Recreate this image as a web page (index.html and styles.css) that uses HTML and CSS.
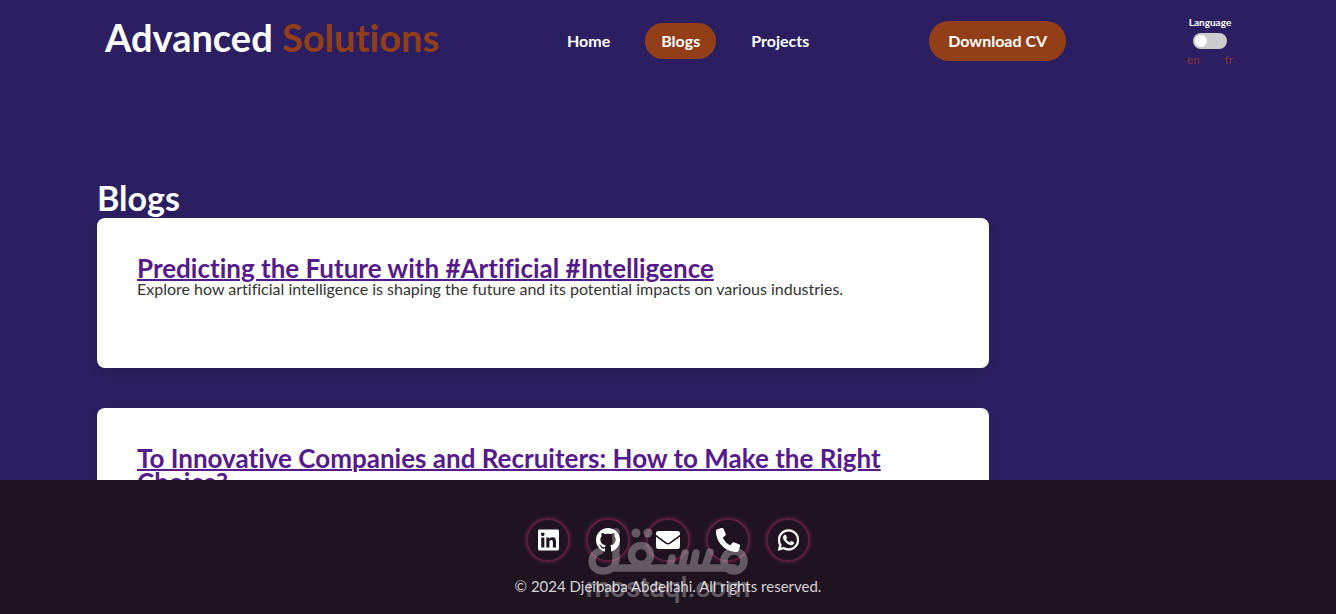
FILE: index.html
```html
<!DOCTYPE html>
<html lang="en">
<head>
<meta charset="utf-8">
<title>Advanced Solutions - Blogs</title>
<link rel="stylesheet" href="styles.css">
</head>
<body>
<header class="header">
  <a class="brand" href="#">Advanced <span class="brand-accent">Solutions</span></a>
  <nav class="nav">
    <a class="nav-link" href="#">Home</a>
    <a class="nav-link active" href="#">Blogs</a>
    <a class="nav-link" href="#">Projects</a>
  </nav>
  <button class="cv-button" type="button">Download CV</button>
  <div class="language">
    <label class="language-label" for="lang">Language</label>
    <input class="switch" id="lang" type="checkbox" role="switch">
    <div class="language-codes"><span>en</span><span>fr</span></div>
  </div>
</header>
<main class="main">
  <h1 class="page-title">Blogs</h1>
  <article class="card">
    <h2 class="card-title"><a href="#">Predicting the Future with #Artificial #Intelligence</a></h2>
    <p class="card-text">Explore how artificial intelligence is shaping the future and its potential impacts on various industries.</p>
  </article>
  <article class="card">
    <h2 class="card-title"><a href="#">To Innovative Companies and Recruiters: How to Make the Right Choice?</a></h2>
  </article>
</main>
<footer class="footer">
  <div class="socials">
    <a class="social" href="#" aria-label="LinkedIn"><svg class="icon" viewBox="0 0 448 512"><path d="M416 32H31.900C14.300 32 0 46.500 0 64.300v383.400C0 465.500 14.300 480 31.900 480H416c17.600 0 32-14.500 32-32.300V64.300c0-17.800-14.400-32.300-32-32.300zM135.400 416H69V202.200h66.500V416zm-33.200-243c-21.300 0-38.500-17.300-38.500-38.500S80.900 96 102.200 96c21.200 0 38.500 17.300 38.500 38.500 0 21.300-17.200 38.500-38.500 38.500zm282.100 243h-66.400V312c0-24.800-.5-56.700-34.500-56.700-34.600 0-39.900 27-39.900 54.900V416h-66.400V202.200h63.700v29.200h.9c8.900-16.800 30.600-34.500 62.900-34.500 67.200 0 79.700 44.300 79.700 101.900V416z"/></svg></a>
    <a class="social" href="#" aria-label="GitHub"><svg class="icon" viewBox="0 0 16 16"><path d="M8 0C3.580 0 0 3.580 0 8c0 3.540 2.290 6.530 5.470 7.590.4.070.55-.17.55-.38 0-.19-.01-.82-.01-1.490-2.010.37-2.530-.49-2.690-.94-.09-.23-.48-.94-.82-1.130-.28-.15-.68-.52-.01-.53.63-.01 1.080.58 1.230.82.72 1.210 1.870.87 2.330.66.070-.52.28-.87.51-1.070-1.780-.2-3.640-.89-3.640-3.950 0-.87.31-1.590.82-2.150-.08-.2-.36-1.020.08-2.120 0 0 .67-.21 2.200.82.64-.18 1.320-.27 2-.27s1.360.09 2 .27c1.530-1.040 2.200-.82 2.200-.82.44 1.100.16 1.920.08 2.120.51.56.82 1.270.82 2.150 0 3.070-1.870 3.750-3.650 3.950.29.25.54.73.54 1.480 0 1.070-.01 1.930-.01 2.200 0 .21.15.46.55.38A8.010 8.010 0 0 0 16 8c0-4.420-3.580-8-8-8z"/></svg></a>
    <a class="social" href="#" aria-label="Email"><svg class="icon" viewBox="0 0 512 512"><path d="M502.300 190.800c3.900-3.100 9.700-.2 9.700 4.700V400c0 26.500-21.500 48-48 48H48c-26.500 0-48-21.500-48-48V195.600c0-5 5.700-7.800 9.700-4.700 22.400 17.400 52.100 39.500 154.100 113.600 21.100 15.400 56.700 47.800 92.200 47.600 35.700.3 72-32.800 92.300-47.600 102-74.100 131.600-96.300 154-113.700zM256 320c23.200.4 56.600-29.200 73.400-41.400 132.700-96.300 142.800-104.700 173.400-128.700 5.800-4.500 9.200-11.500 9.200-18.900v-19c0-26.500-21.500-48-48-48H48c-26.500 0-48 21.500-48 48v19c0 7.400 3.400 14.300 9.200 18.900 30.600 23.900 40.700 32.400 173.400 128.700 16.800 12.200 50.200 41.800 73.400 41.400z"/></svg></a>
    <a class="social" href="#" aria-label="Phone"><svg class="icon" viewBox="0 0 512 512"><path d="M164.900 24.600c-7.700-18.600-28-28.500-47.400-23.200l-88 24C12.100 30.200 0 46 0 64c0 247.400 200.600 448 448 448 18 0 33.800-12.100 38.600-29.500l24-88c5.300-19.400-4.600-39.700-23.200-47.400l-96-40c-16.300-6.800-35.200-2.100-46.300 11.600L304.700 368C234.300 334.700 177.300 277.700 144 207.300l49.300-40.300c13.700-11.200 18.400-30 11.600-46.300l-40-96z"/></svg></a>
    <a class="social" href="#" aria-label="WhatsApp"><svg class="icon" viewBox="0 0 448 512"><path stroke="#fff" stroke-width="12" d="M380.900 97.100C339 55.100 283.200 32 223.900 32c-122.400 0-222 99.600-222 222 0 39.100 10.200 77.300 29.600 111L0 480l117.700-30.900c32.400 17.700 68.900 27 106.100 27h.1c122.300 0 224.100-99.600 224.100-222 0-59.300-25.200-115-67.100-157zm-157 341.600c-33.200 0-65.700-8.900-94-25.700l-6.700-4-69.800 18.300L72 359.200l-4.400-7c-18.500-29.400-28.200-63.300-28.200-98.200 0-101.700 82.800-184.500 184.600-184.500 49.300 0 95.600 19.200 130.400 54.100 34.800 34.900 56.200 81.200 56.100 130.500 0 101.800-84.900 184.600-186.600 184.600zm101.200-138.200c-5.500-2.800-32.800-16.200-37.900-18-5.100-1.900-8.800-2.800-12.500 2.800-3.700 5.600-14.300 18-17.600 21.800-3.200 3.700-6.500 4.200-12 1.400-32.600-16.300-54-29.100-75.500-66-5.700-9.800 5.700-9.100 16.300-30.300 1.800-3.700.9-6.900-.5-9.700-1.400-2.800-12.500-30.100-17.100-41.200-4.500-10.800-9.100-9.300-12.500-9.500-3.200-.2-6.900-.2-10.600-.2-3.700 0-9.700 1.400-14.800 6.900-5.100 5.600-19.400 19-19.400 46.300 0 27.300 19.900 53.700 22.600 57.400 2.800 3.700 39.100 59.700 94.800 83.800 35.200 15.200 49 16.500 66.600 13.900 10.700-1.600 32.800-13.400 37.400-26.400 4.600-13 4.600-24.100 3.200-26.400-1.300-2.500-5-3.900-10.500-6.600z"/></svg></a>
  </div>
  <p class="copyright">© 2024 Djeibaba Abdellahi. All rights reserved.</p>
  <div class="watermark" aria-hidden="true">
    <svg class="watermark-logo" viewBox="0 0 160 48"><g fill="none" stroke="#fff" stroke-width="7.500" stroke-linecap="round" stroke-linejoin="round"><path d="M12 23C1 26 1 43 15 43C24 43 28 37 28 31V4M25 40H146"/><circle cx="53" cy="27" r="9.500"/><circle cx="146" cy="33" r="10"/><path d="M82 39L84 30M94 39L97 25M105 39L108 25M117 39L122 24"/></g><circle cx="48" cy="5" r="4.500" fill="#fff"/><circle cx="60" cy="5" r="4.500" fill="#fff"/></svg>
    <span class="watermark-text">mostaql.com</span>
  </div>
</footer>
</body>
</html>
```
FILE: styles.css
```css
* {
  box-sizing: border-box;
  margin: 0;
  padding: 0;
}

body {
  height: 100vh;
  overflow: hidden;
  display: flex;
  flex-direction: column;
  background: #2b1f61;
  color: #fff;
  font-family: Lato, "Open Sans", sans-serif;
  font-variant-ligatures: none;
}

a {
  color: inherit;
  text-decoration: none;
}

.header {
  display: flex;
  align-items: center;
  padding: 15px 103px 0 105px;
}

.brand {
  align-self: flex-start;
  width: 344px;
  font-size: 38px;
  line-height: 44px;
  font-weight: 700;
  white-space: nowrap;
}

.brand-accent {
  color: #923f19;
}

.nav {
  display: flex;
  gap: 19px;
  margin-left: 102px;
}

.nav-link {
  padding: 8px 16px;
  border-radius: 20px;
  font-size: 16px;
  line-height: 20px;
  font-weight: 700;
}

.nav-link.active {
  background: #923f19;
}

.cv-button {
  margin-left: 104px;
  padding: 10px 19px;
  border: 0;
  border-radius: 20px;
  background: #923f19;
  color: #fff;
  font: 700 16px/20px Lato, sans-serif;
}

.language {
  display: flex;
  flex-direction: column;
  align-items: center;
  margin-left: auto;
  width: 46px;
}

.language-label {
  font-size: 10px;
  line-height: 14px;
  font-weight: 700;
}

.switch {
  appearance: none;
  display: flex;
  align-items: center;
  width: 34px;
  height: 16px;
  margin: 4px 0;
  padding: 0 2px;
  border-radius: 8px;
  background: #ccc;
}

.switch::before {
  content: "";
  width: 12px;
  height: 12px;
  border-radius: 50%;
  background: #fff;
}

.language-codes {
  display: flex;
  justify-content: space-between;
  align-self: stretch;
  color: #84343b;
  font-size: 12px;
  line-height: 14px;
}

.main {
  flex: 1;
  min-height: 0;
  overflow: hidden;
  width: 75%;
  padding: 113px 13px 0 97px;
}

.page-title {
  font-size: 34px;
  line-height: 36px;
  padding-bottom: 2px;
}

.card {
  min-height: 150px;
  margin-bottom: 40px;
  padding: 38px 40px;
  border-radius: 8px;
  background: #fff;
  color: #333;
  box-shadow: 0 4px 8px rgba(0, 0, 0, 0.1);
}

.card-title {
  color: #551a8b;
  font-size: 26px;
  line-height: 24px;
}

.card-title a {
  text-decoration: underline;
  text-decoration-thickness: 2px;
}

.card-text {
  font-size: 16px;
  line-height: 18px;
}

.footer {
  position: relative;
  display: flex;
  flex-direction: column;
  align-items: center;
  padding: 38px 0 19px;
  background: #1f1320;
}

.socials {
  display: flex;
  gap: 16px;
}

.social {
  display: flex;
  align-items: center;
  justify-content: center;
  width: 44px;
  height: 44px;
  border: 2px solid #5c203d;
  border-radius: 50%;
  box-shadow: 0 0 4px #6b2445;
}

.icon {
  height: 24px;
  fill: #fff;
}

.copyright {
  margin-top: 16px;
  color: #d6d3d7;
  font-size: 15px;
  line-height: 17px;
}

.watermark {
  position: absolute;
  top: 48px;
  left: 50%;
  width: 160px;
  transform: translateX(-50%);
  display: flex;
  flex-direction: column;
  align-items: center;
  opacity: 0.3;
  pointer-events: none;
}

.watermark-logo {
  width: 160px;
}

.watermark-text {
  font: 500 28px/24px Roboto, sans-serif;
}
```
